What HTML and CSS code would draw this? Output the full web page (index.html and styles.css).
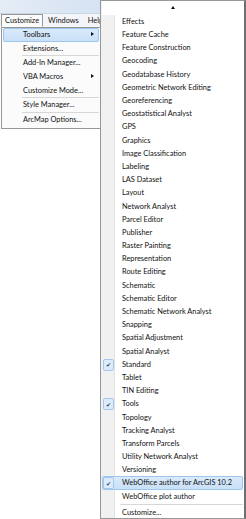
FILE: index.html
```html
<!DOCTYPE html>
<html lang="en">
<head>
    <meta charset="UTF-8">
    <title>ArcMap - Customize menu</title>
    <link rel="stylesheet" href="styles.css">
</head>
<body>
    <div class="window">
        <div class="titlebar"></div>
        <div class="menubar">
            <span class="menubar-item open">Customize</span>
            <span class="menubar-item">Windows</span>
            <span class="menubar-item">Help</span>
        </div>

        <!-- Customize dropdown -->
        <ul class="menu dropdown">
            <li class="item active has-sub">Toolbars</li>
            <li class="item">Extensions...</li>
            <li class="sep"></li>
            <li class="item">Add-In Manager...</li>
            <li class="item has-sub">VBA Macros</li>
            <li class="item">Customize Mode...</li>
            <li class="sep"></li>
            <li class="item">Style Manager...</li>
            <li class="sep"></li>
            <li class="item">ArcMap Options...</li>
        </ul>

        <!-- Toolbars submenu -->
        <ul class="menu submenu">
            <li class="scroll-up"><span class="tri-up"></span></li>
            <li class="item">Effects</li>
            <li class="item">Feature Cache</li>
            <li class="item">Feature Construction</li>
            <li class="item">Geocoding</li>
            <li class="item">Geodatabase History</li>
            <li class="item">Geometric Network Editing</li>
            <li class="item">Georeferencing</li>
            <li class="item">Geostatistical Analyst</li>
            <li class="item">GPS</li>
            <li class="item">Graphics</li>
            <li class="item">Image Classification</li>
            <li class="item">Labeling</li>
            <li class="item">LAS Dataset</li>
            <li class="item">Layout</li>
            <li class="item">Network Analyst</li>
            <li class="item">Parcel Editor</li>
            <li class="item">Publisher</li>
            <li class="item">Raster Painting</li>
            <li class="item">Representation</li>
            <li class="item">Route Editing</li>
            <li class="item">Schematic</li>
            <li class="item">Schematic Editor</li>
            <li class="item">Schematic Network Analyst</li>
            <li class="item">Snapping</li>
            <li class="item">Spatial Adjustment</li>
            <li class="item">Spatial Analyst</li>
            <li class="item checked">Standard</li>
            <li class="item">Tablet</li>
            <li class="item">TIN Editing</li>
            <li class="item checked">Tools</li>
            <li class="item">Topology</li>
            <li class="item">Tracking Analyst</li>
            <li class="item">Transform Parcels</li>
            <li class="item">Utility Network Analyst</li>
            <li class="item">Versioning</li>
            <li class="item checked active">WebOffice author for ArcGIS 10.2</li>
            <li class="item">WebOffice plot author</li>
            <li class="sep"></li>
            <li class="item last">Customize...</li>
        </ul>
    </div>
</body>
</html>
```

FILE: styles.css
```css
body {
    margin: 0;
    background: #fff;
    font-family: Lato, "Noto Sans", sans-serif;
    font-size: 7.4px;
    color: #111;
}

.window {
    position: relative;
    width: 246px;
    height: 519px;
    overflow: hidden;
}

.titlebar {
    height: 13px;
    background: linear-gradient(90deg, #e4ecf6 0%, #d6e3f2 40%, #d0ddef 100%);
    border-bottom: 1px solid #c9d6e6;
}

.menubar {
    display: flex;
    height: 13px;
    align-items: stretch;
    padding-left: 1px;
    background: #f3f5f8;
}
.menubar-item {
    display: flex;
    align-items: center;
    padding: 0 3px 0 3px;
    margin-right: 1px;
    border: 1px solid transparent;
}
.menubar-item.open {
    background: #fbfbfb;
    border-color: #979797;
    border-bottom-color: #fbfbfb;
}

/* menus */
.menu {
    list-style: none;
    margin: 0;
    padding: 0;
    background: #fcfcfc;
    border: 1px solid #979797;
}
.menu .item {
    position: relative;
    display: flex;
    align-items: center;
    height: 13.6px;
    padding-left: 19px;
    border: 1px solid transparent;
    box-sizing: border-box;
    white-space: nowrap;
}
.menu .item.active {
    background: linear-gradient(#d9eafb, #c9e0f7);
    border-color: #9cc6ee;
    border-radius: 2px;
}
.menu .sep {
    height: 1px;
    margin: 0 0 0 19px;
    background: #d7d7d7;
}
.has-sub::after {
    content: "";
    position: absolute;
    right: 4px;
    top: 50%;
    margin-top: -2.5px;
    border-left: 3px solid #111;
    border-top: 2.5px solid transparent;
    border-bottom: 2.5px solid transparent;
}

.dropdown {
    position: absolute;
    left: 1px;
    top: 27px;
    width: 100px;
    box-sizing: border-box;
    padding: 0 1px 2px;
    background: #fbfbfb;
}

.submenu {
    position: absolute;
    left: 100px;
    top: 0;
    width: 146px;
    height: 519px;
    box-sizing: border-box;
    border-right: 2px solid #6f6f6f;
    padding: 0 1px;
    background: linear-gradient(90deg, #f1f1f1 0, #f1f1f1 13px, #e3e3e3 13px, #e3e3e3 14px, #fff 14px);
}
.submenu .item {
    height: 13.2px;
    padding-left: 19px;
}
.submenu .sep {
    margin: 1px 0 1px 18px;
    border-bottom: 1px solid #fff;
}
.submenu .item.last {
    height: 12.5px;
}

.scroll-up {
    height: 13.8px;
    display: flex;
    align-items: center;
    justify-content: center;
    background: #fff;
}
.tri-up {
    border-bottom: 3px solid #111;
    border-left: 2.5px solid transparent;
    border-right: 2.5px solid transparent;
}

.checked::before {
    content: "\2714";
    position: absolute;
    left: 0;
    top: 50%;
    width: 9px;
    height: 10px;
    margin-top: -5.5px;
    display: flex;
    align-items: center;
    justify-content: center;
    font-size: 6px;
    color: #24426a;
    background: #dcebfb;
    border: 1px solid #a7c7ea;
    border-radius: 2px;
}
```
